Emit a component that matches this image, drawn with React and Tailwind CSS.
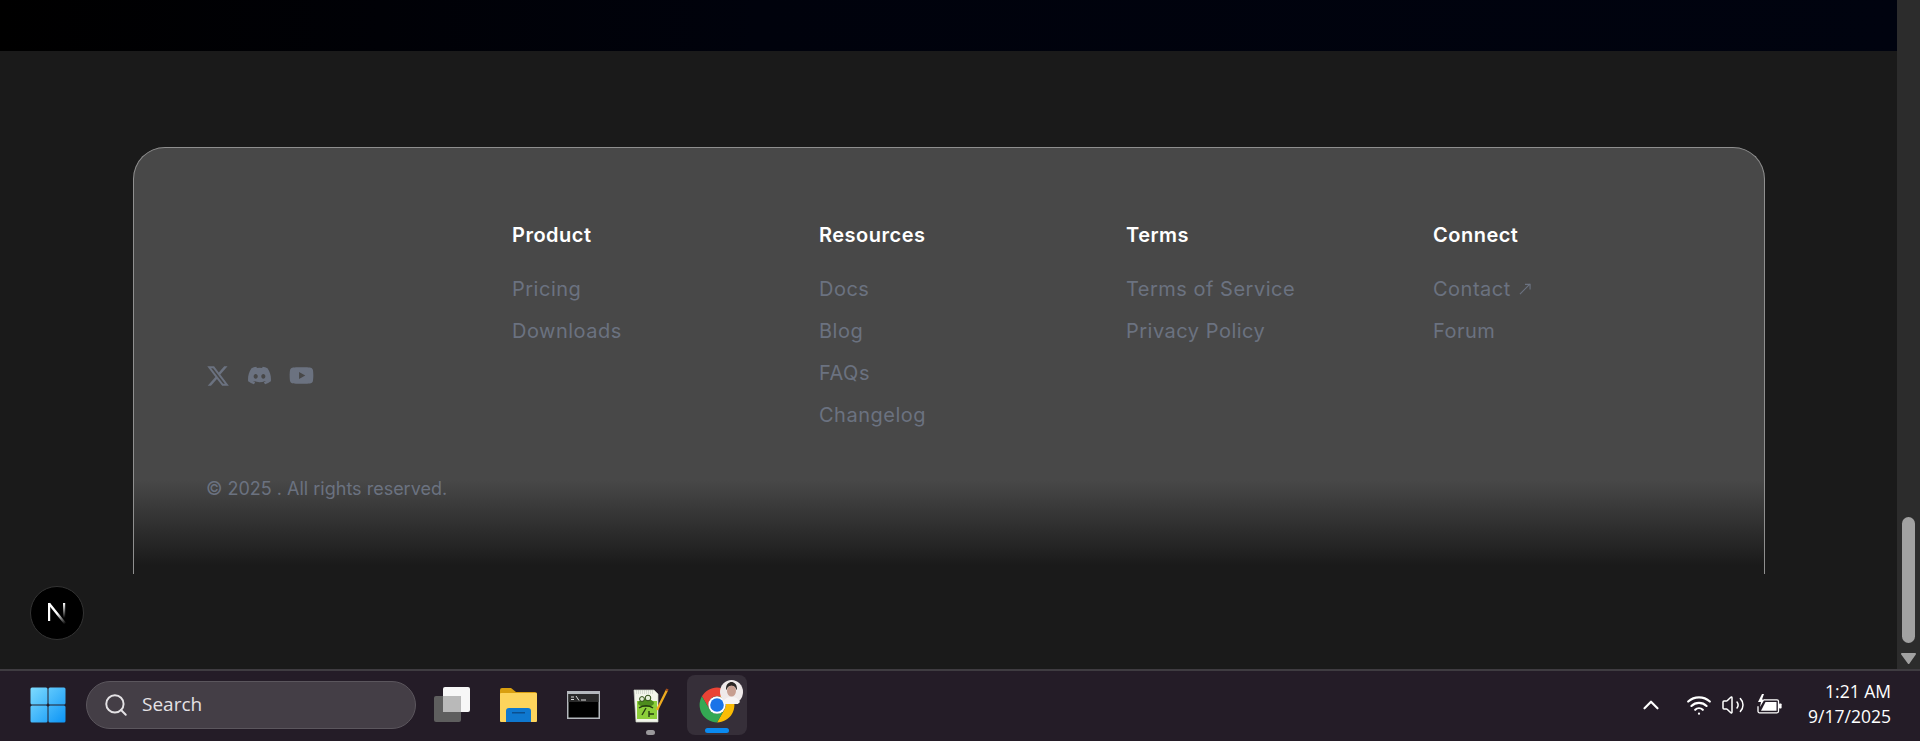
import React from "react";
import { FaXTwitter, FaDiscord, FaYoutube } from "react-icons/fa6";
import { Search, ChevronUp, Wifi, Volume2 } from "lucide-react";

const columns = [
  { title: "Product", links: ["Pricing", "Downloads"] },
  { title: "Resources", links: ["Docs", "Blog", "FAQs", "Changelog"] },
  { title: "Terms", links: ["Terms of Service", "Privacy Policy"] },
  { title: "Connect", links: ["Contact", "Forum"] },
];

function WindowsLogo() {
  return (
    <svg width="36" height="36" viewBox="0 0 36 36">
      <defs>
        <linearGradient id="win" x1="0" y1="0" x2="36" y2="36" gradientUnits="userSpaceOnUse">
          <stop offset="0" stopColor="#7fdcff" />
          <stop offset="1" stopColor="#0a93f5" />
        </linearGradient>
      </defs>
      <rect x="0.5" y="0.5" width="17" height="17" rx="1.5" fill="url(#win)" />
      <rect x="18.5" y="0.5" width="17" height="17" rx="1.5" fill="url(#win)" />
      <rect x="0.5" y="18.5" width="17" height="17" rx="1.5" fill="url(#win)" />
      <rect x="18.5" y="18.5" width="17" height="17" rx="1.5" fill="url(#win)" />
    </svg>
  );
}

function TaskView() {
  return (
    <svg width="36" height="35" viewBox="0 0 36 35">
      <rect x="0" y="9" width="27" height="26" rx="2" fill="#5e5e5e" />
      <rect x="9" y="0" width="27" height="25" rx="2" fill="#f7f7f7" />
      <rect x="9" y="9" width="18" height="16" fill="#b9b9b9" />
    </svg>
  );
}

function Explorer() {
  return (
    <svg width="37" height="34" viewBox="0 0 37 34">
      <path d="M0 2a2 2 0 0 1 2-2h9l5 4h19a2 2 0 0 1 2 2v5H0z" fill="#d99f10" />
      <rect x="0" y="5" width="37" height="29" rx="1" fill="#fdd45c" />
      <path d="M6 34v-11a3 3 0 0 1 3-3h19a3 3 0 0 1 3 3v11z" fill="#0f78cf" />
      <rect x="12" y="24" width="13" height="1.5" fill="#0b4f8f" />
    </svg>
  );
}

function Terminal() {
  return (
    <svg width="33" height="28" viewBox="0 0 33 28">
      <rect x="0" y="0" width="33" height="28" fill="#b4b8bd" />
      <rect x="1.5" y="3" width="30" height="23.500" fill="#000" />
      <rect x="1.5" y="3" width="30" height="8" fill="#2a2a2a" />
      <path d="M4 6h3M4 8.500h3M9 5l3 4.500M14 9h5" stroke="#ddd" strokeWidth="1" fill="none" />
    </svg>
  );
}

function NotepadPP() {
  return (
    <svg width="36" height="36" viewBox="0 0 36 36">
      <path d="M1 3h20l4 4v28H3z" fill="#f2f5ea" stroke="#c9cfc3" strokeWidth="0.7" />
      <path d="M3 4h17M3 6h17" stroke="#9aa39a" strokeWidth="0.6" strokeDasharray="1 1" />
      <rect x="4" y="14" width="20" height="18" fill="#8ccf3a" />
      <ellipse cx="13" cy="16" rx="8" ry="4" fill="#4d8c1d" />
      <circle cx="15" cy="11" r="2.800" fill="#e3eed6" stroke="#2e4d14" />
      <circle cx="9" cy="12" r="2.400" fill="#e3eed6" stroke="#2e4d14" />
      <path d="M6 21c4-3 10-3 14 0M9 28l4-7M16 24v6M16 27h5" stroke="#263c12" strokeWidth="1.400" fill="none" />
      <path d="M24 23L34 3" stroke="#edab1f" strokeWidth="2.400" />
      <path d="M33.500 4l1-2" stroke="#a8501a" strokeWidth="2.400" />
    </svg>
  );
}

function Chrome() {
  return (
    <svg width="38" height="38" viewBox="0 0 48 48">
      <path d="M4.950 13A22 22 0 0 1 43.050 13H24A11 11 0 0 0 14.470 29.500z" fill="#ea4335" />
      <path d="M43.050 13A22 22 0 0 1 24 46L33.530 29.500A11 11 0 0 0 24 13z" fill="#fbbc04" />
      <path d="M24 46A22 22 0 0 1 4.950 13L14.470 29.500A11 11 0 0 0 33.530 29.500z" fill="#34a853" />
      <circle cx="24" cy="24" r="11" fill="#fff" />
      <circle cx="24" cy="24" r="8.600" fill="#1a73e8" />
    </svg>
  );
}

function Avatar() {
  return (
    <svg width="23" height="24" viewBox="0 0 23 24">
      <ellipse cx="11.500" cy="12" rx="11.500" ry="12" fill="#efeaea" />
      <path d="M6 9c0-5 3-7 5.500-7S17 4 17 9l-1 1c0-2-1-4-4.500-4S7 8 7 10z" fill="#2a2624" />
      <ellipse cx="11.500" cy="11" rx="4.500" ry="5.500" fill="#c79e90" />
      <path d="M3 22c2-4 5-5 8.500-5s6.500 1 8.500 5a11.500 12 0 0 1-17 0z" fill="#f7f4f4" />
    </svg>
  );
}

function Battery() {
  return (
    <svg width="25" height="22" viewBox="0 0 25 22" fill="none">
      <path d="M7 5.800h13a1.500 1.500 0 0 1 1.500 1.500v10a1.500 1.500 0 0 1-1.500 1.500H2.500a1.500 1.500 0 0 1-1.500-1.500v-5" stroke="#fff" strokeWidth="1.300" />
      <path d="M8.500 8H19.500v8.700H4z" fill="#fff" />
      <rect x="22" y="9.500" width="2.600" height="5" rx="0.800" fill="#fff" />
      <path d="M5 0L1 8h3L3 13l4.500-7.500H5L7 0z" fill="#fff" />
    </svg>
  );
}

function Scrollbar() {
  return (
    <div className="w-[23px] shrink-0 bg-[#2c2c2c] flex flex-col items-center justify-end pb-[5px]">
      <div className="w-[13px] h-[126px] rounded-full bg-[#a1a1a1]" />
      <svg className="mt-[10px]" width="15" height="11" viewBox="0 0 15 11">
        <path d="M1 0h13a1 1 0 0 1 .8 1.500l-6.300 9a1 1 0 0 1-1.700 0L.2 1.500A1 1 0 0 1 1 0z" fill="#a1a1a1" />
      </svg>
    </div>
  );
}

function Footer() {
  return (
    <div className="relative h-[427px] rounded-t-[32px] border border-b-0 border-[#8f8f8f] bg-[linear-gradient(to_bottom,#484848_0%,#484848_78%,#1a1a1a_98%)] pl-[73px] pt-[71px] text-[#6b7280] font-['Inter',sans-serif]">
      <div className="flex">
        <div className="w-[305px] shrink-0 pt-[144px]">
          <div className="flex items-center -ml-[1px]">
            <FaXTwitter size={24} />
            <FaDiscord size={25} className="ml-[17px]" />
            <FaYoutube size={25} className="ml-[17px]" />
          </div>
        </div>
        <div className="flex">
          {columns.map((c) => (
            <div key={c.title} className="w-[307px]">
              <div className="text-white text-xl leading-[32px] font-semibold tracking-wide">{c.title}</div>
              <ul className="mt-[24px] flex flex-col gap-[14px]">
                {c.links.map((l) => (
                  <li key={l} className="flex items-center gap-[8px] text-xl leading-[28px] tracking-wide">
                    <span>{l}</span>
                    {l === "Contact" && (
                      <svg width="12" height="12" viewBox="0 0 13 13" fill="none" stroke="#6b7280" strokeWidth="1.200">
                        <path d="M1 12L12 1M6.500 1.500H12V7" />
                      </svg>
                    )}
                  </li>
                ))}
              </ul>
            </div>
          ))}
        </div>
      </div>
      <div className="mt-[48px] -ml-[1px] text-lg leading-[24px]">© 2025 . All rights reserved.</div>
    </div>
  );
}

function Taskbar() {
  return (
    <div className="h-[72px] shrink-0 border-t-[2px] border-[#3f3c41] bg-[#241c27] flex items-center pb-[3px] text-white font-['Open_Sans',sans-serif]">
      <div className="ml-[30px] w-[36px] h-[36px]"><WindowsLogo /></div>
      <div className="ml-[20px] w-[330px] h-[48px] rounded-full bg-[#443e46] border border-[#5b565d] flex items-center pl-[16px] gap-[13px] text-[#e4e2e5] text-[19px]">
        <Search size={26} strokeWidth={1.800} />
        <span>Search</span>
      </div>
      <div className="ml-[18px]"><TaskView /></div>
      <div className="ml-[30px]"><Explorer /></div>
      <div className="ml-[30px]"><Terminal /></div>
      <div className="ml-[33px] relative">
        <NotepadPP />
        <div className="absolute left-[13px] top-[43px] w-[9px] h-[5px] rounded-full bg-[#9a989b]" />
      </div>
      <div className="ml-[18px] relative w-[60px] h-[60px] rounded-[8px] bg-[#362f39] flex items-center justify-center">
        <Chrome />
        <div className="absolute right-[4px] top-[5px]"><Avatar /></div>
        <div className="absolute left-[18px] bottom-[2px] w-[24px] h-[5px] rounded-full bg-[#0a8af0]" />
      </div>
      <div className="flex-1" />
      <ChevronUp size={26} strokeWidth={2} />
      <div className="ml-[22px]"><Wifi size={26} strokeWidth={2} /></div>
      <div className="ml-[9px]"><Volume2 size={24} strokeWidth={1.500} /></div>
      <div className="ml-[12px]"><Battery /></div>
      <div className="ml-[19px] mr-[29px] mb-[1px] w-[90px] text-right text-[17.5px] leading-[25px] whitespace-nowrap">
        <div>1:21 AM</div>
        <div>9/17/2025</div>
      </div>
    </div>
  );
}

export default function App() {
  return (
    <div className="relative h-[741px] w-full overflow-hidden flex flex-col bg-[#1a1a1a]">
      <div className="flex-1 flex min-h-0">
        <div className="flex-1 flex flex-col min-w-0">
          <div className="h-[51px] shrink-0 bg-[linear-gradient(to_right,#000000,#00020c_40%,#00030f)]" />
          <div className="pt-[96px] pl-[133px] pr-[132px]">
            <Footer />
          </div>
        </div>
        <Scrollbar />
      </div>
      <Taskbar />
      <div className="absolute left-[30px] top-[586px] w-[54px] h-[54px] rounded-full bg-black border border-[#333] flex items-center justify-center">
        <svg width="22" height="24" viewBox="0 0 22 24" fill="none">
          <defs>
            <linearGradient id="nd" x1="8" y1="8" x2="19" y2="23" gradientUnits="userSpaceOnUse">
              <stop offset="0.3" stopColor="#fff" />
              <stop offset="1" stopColor="#fff" stopOpacity="0" />
            </linearGradient>
            <linearGradient id="nr" x1="0" y1="2" x2="0" y2="17" gradientUnits="userSpaceOnUse">
              <stop offset="0" stopColor="#fff" />
              <stop offset="1" stopColor="#fff" stopOpacity="0" />
            </linearGradient>
          </defs>
          <rect x="2" y="2" width="2.200" height="18" fill="#fff" />
          <path d="M3 2.500L19.500 23" stroke="url(#nd)" strokeWidth="2.400" />
          <rect x="17" y="2" width="2.200" height="15" fill="url(#nr)" />
        </svg>
      </div>
    </div>
  );
}
